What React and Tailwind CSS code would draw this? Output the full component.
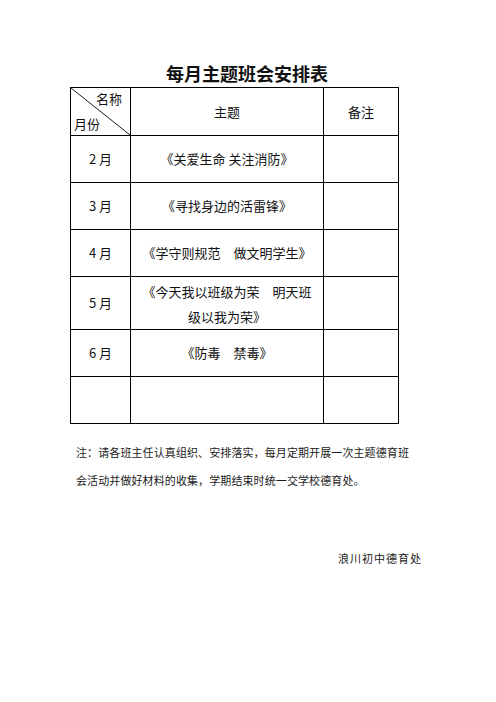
import React from "react";

const rows = [
  { month: "2 月", topic: "《关爱生命 关注消防》" },
  { month: "3 月", topic: "《寻找身边的活雷锋》" },
  { month: "4 月", topic: "《学守则规范\u3000做文明学生》" },
  { month: "5 月", topic: ["《今天我以班级为荣\u3000明天班", "级以我为荣》"] },
  { month: "6 月", topic: "《防毒\u3000禁毒》" },
  { month: "", topic: "" },
];

const sans = { fontFamily: '"Noto Sans CJK SC", "Noto Sans", sans-serif' };

const App = () => {
  return (
    <div className="w-[496px] h-[702px] bg-white text-black overflow-hidden">
      <div className="pt-[61px] pl-[70px]">
        <h1
          className="w-[328px] pl-[26px] h-[24px] leading-[24px] text-[18px] font-bold text-center text-[#111]"
          style={sans}
        >
          每月主题班会安排表
        </h1>

        <table
          className="mt-[2px] w-[328px] border-collapse table-fixed text-[13px] text-[#111]"
          style={sans}
        >
          <colgroup>
            <col className="w-[60px]" />
            <col className="w-[193px]" />
            <col className="w-[75px]" />
          </colgroup>
          <thead>
            <tr className="h-[47px]">
              <th className="relative border border-black p-0 font-normal">
                <svg className="absolute inset-0 w-full h-full" preserveAspectRatio="none" viewBox="0 0 60 47">
                  <line x1="0" y1="0" x2="60" y2="47" stroke="black" strokeWidth="0.9" />
                </svg>
                <div className="flex flex-col h-[47px] leading-[18px]">
                  <span className="text-right pr-[8px] pt-[2px]">名称</span>
                  <span className="text-left pl-[3px] mt-auto pb-[2px]">月份</span>
                </div>
              </th>
              <th className="border border-black font-normal">主题</th>
              <th className="border border-black font-normal">备注</th>
            </tr>
          </thead>
          <tbody>
            {rows.map((r, i) => (
              <tr key={i} className="h-[47px]">
                <td className="border border-black text-center">{r.month}</td>
                <td className="border border-black text-center">
                  {Array.isArray(r.topic) ? (
                    <div className="leading-[25px] pt-[2px]">
                      <div>{r.topic[0]}</div>
                      <div>{r.topic[1]}</div>
                    </div>
                  ) : (
                    r.topic
                  )}
                </td>
                <td className="border border-black"></td>
              </tr>
            ))}
          </tbody>
        </table>
      </div>

      <div
        className="mt-[15px] pl-[76px] text-[11px] leading-[28px] tracking-[0.1px] text-[#1a1a1a]"
        style={{ fontFamily: '"Liberation Serif", "Noto Sans CJK SC", serif' }}
      >
        <div className="whitespace-nowrap">注：请各班主任认真组织、安排落实，每月定期开展一次主题德育班</div>
        <div className="whitespace-nowrap">会活动并做好材料的收集，学期结束时统一交学校德育处。</div>
        <div className="mt-[50px] w-[346px] text-right tracking-[1px]">浪川初中德育处</div>
      </div>
    </div>
  );
};

export default App;
